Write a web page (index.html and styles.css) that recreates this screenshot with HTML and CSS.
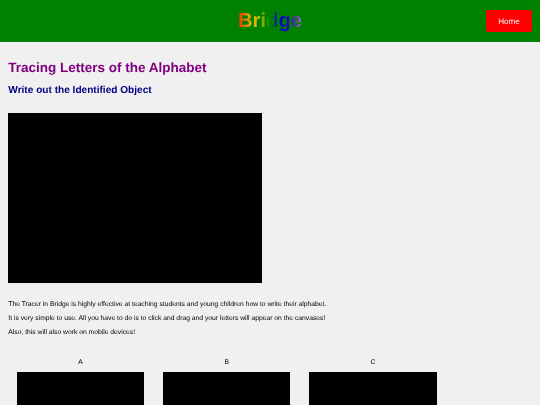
FILE: index.html
```html
<!DOCTYPE html>
<html lang="en">
<head>
<meta charset="utf-8">
<title>Bridge Tracer</title>
<link rel="stylesheet" href="styles.css">
</head>
<body>
<header class="topbar">
  <div class="brand">Bridge</div>
  <a class="home" href="#">Home</a>
</header>
<main class="content">
  <h1 class="title">Tracing Letters of the Alphabet</h1>
  <h2 class="subtitle">Write out the Identified Object</h2>
  <div class="main-canvas"></div>
  <div class="copy">
    <p>The Tracer in Bridge is highly effective at teaching students and young children how to write their alphabet.</p>
    <p>It is very simple to use. All you have to do is to click and drag and your letters will appear on the canvases!</p>
    <p>Also, this will also work on mobile devices!</p>
  </div>
  <div class="letters">
    <div class="letter"><span class="label">A</span><div class="letter-canvas"></div></div>
    <div class="letter"><span class="label">B</span><div class="letter-canvas"></div></div>
    <div class="letter"><span class="label">C</span><div class="letter-canvas"></div></div>
  </div>
</main>
</body>
</html>
```
FILE: styles.css
```css
* { box-sizing: border-box; }
html, body { margin: 0; height: 405px; overflow: hidden; }
html { background: #f0f0f0; }
body { font-family: "Liberation Sans", Arial, sans-serif; color: #000; filter: blur(0.3px); text-rendering: geometricPrecision; }
.topbar { height: 42px; background: #008000; display: flex; align-items: center; justify-content: center; position: relative; }
.brand { font-size: 20.25px; font-weight: 700; background: linear-gradient(to right, #f02a00, #e8a000, #c8c800, #008000, #0000cc, #2a1aa0, #a070b0); -webkit-background-clip: text; background-clip: text; color: transparent; }
.home { position: absolute; right: 8px; top: 10px; width: 46px; height: 22px; background: #ff0000; border-radius: 2px; color: #f4f4f4; font-size: 8.1px; text-decoration: none; display: flex; align-items: center; justify-content: center; }
.content { padding: 16.5px 8.3px 0; }
.title { margin: 0; font-size: 13.5px; line-height: 17px; color: #800080; }
.subtitle { margin: 8.5px 0 0; font-size: 10.1px; line-height: 14px; color: #000080; }
.main-canvas { width: 253.9px; height: 170px; margin-top: 15px; background: #000; }
.copy { margin-top: 16.5px; font-size: 6.75px; line-height: 9px; }
.copy p { margin: 0 0 5.2px; }
.letters { display: flex; gap: 18.7px; margin-top: 21px; padding-left: 8.5px; }
.letter { width: 127.5px; display: flex; flex-direction: column; align-items: center; font-size: 6.75px; line-height: 9px; }
.label { margin-bottom: 5.5px; }
.letter-canvas { width: 127.5px; height: 60px; background: #000; }
```
